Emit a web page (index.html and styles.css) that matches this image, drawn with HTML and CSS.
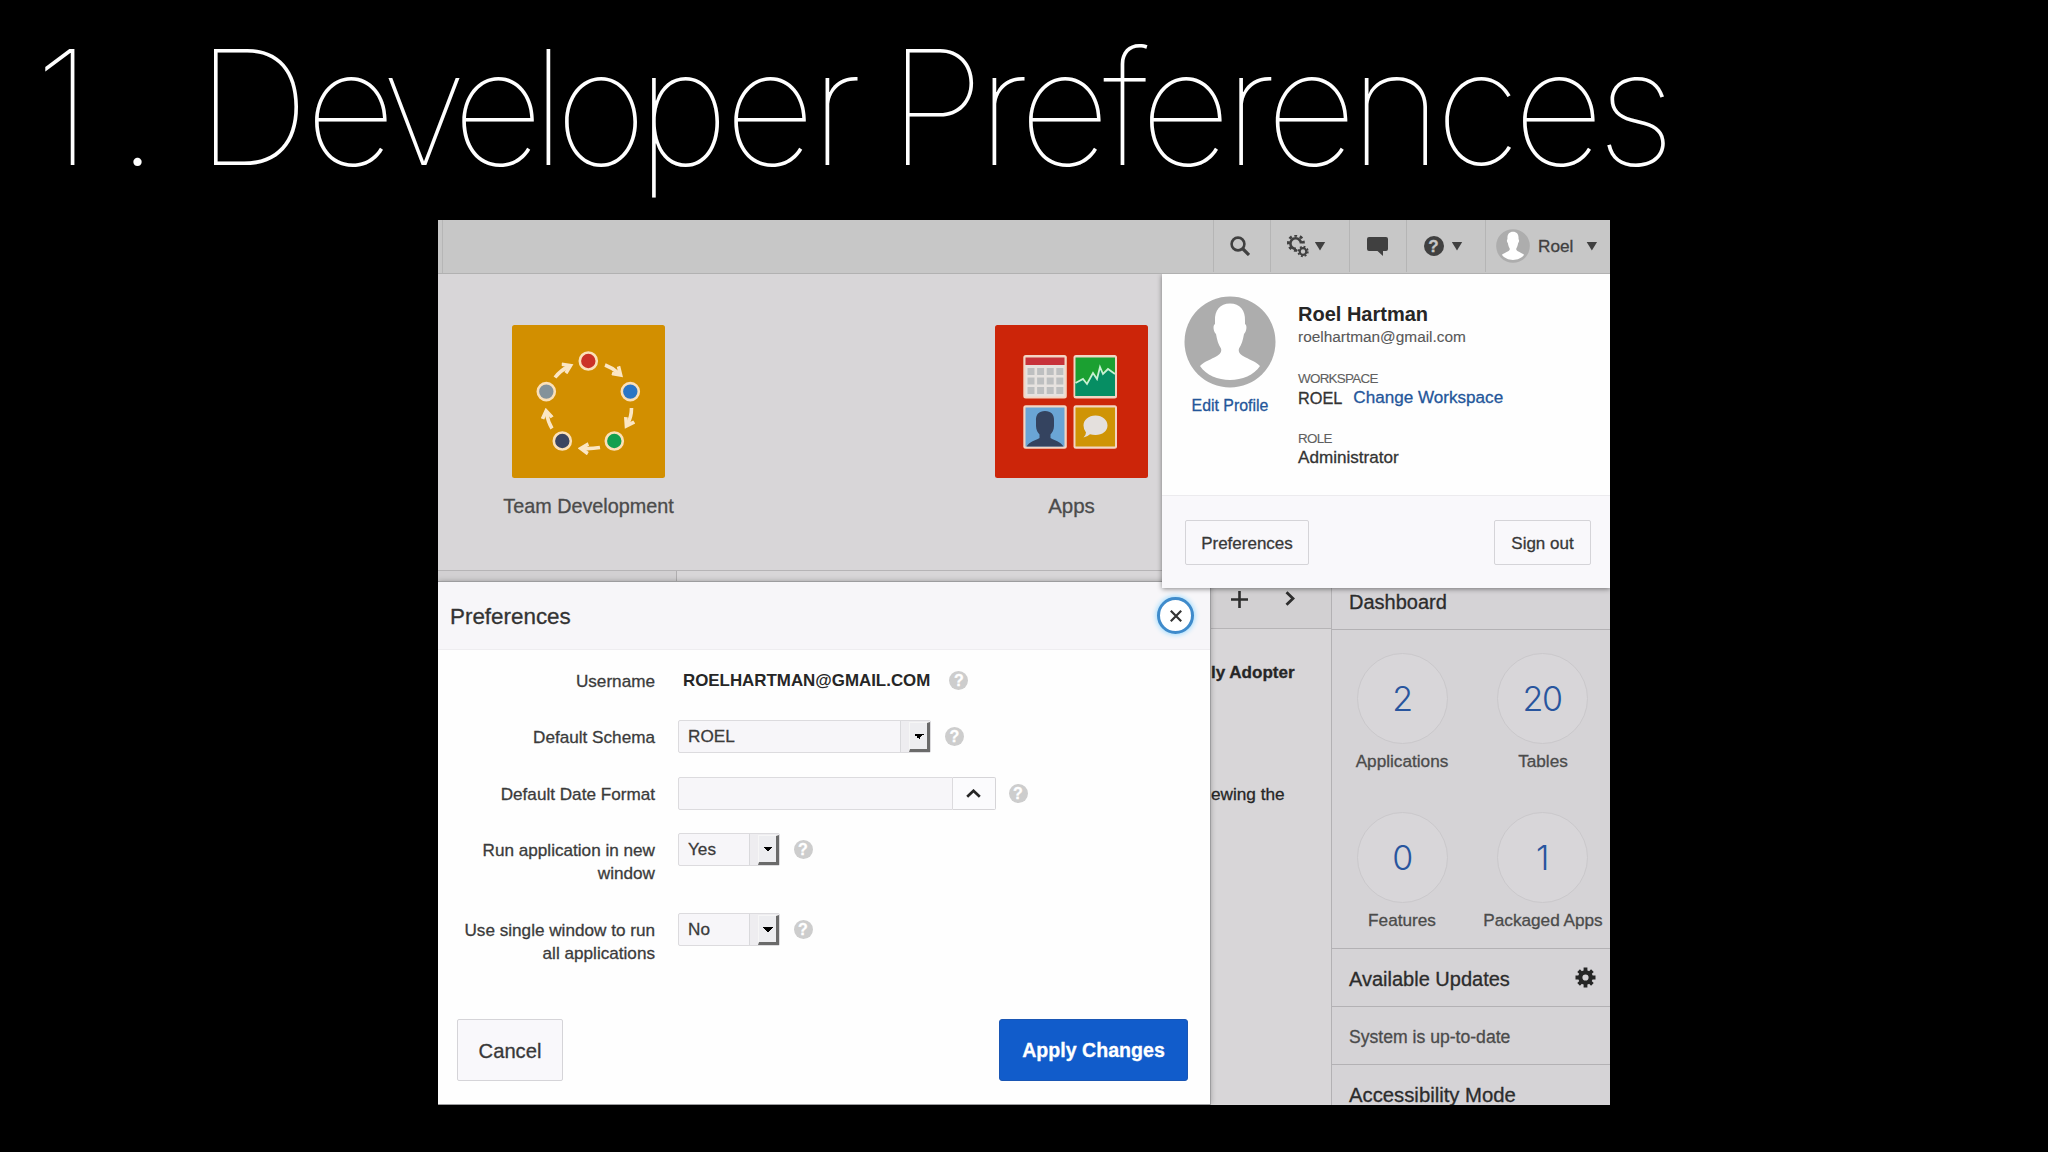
FILE: index.html
```html
<!DOCTYPE html>
<html lang="en">
<head>
<meta charset="utf-8">
<title>1. Developer Preferences</title>
<link rel="stylesheet" href="styles.css">
</head>
<body>
<svg class="defs" width="0" height="0">
  <defs>
    <symbol id="person" viewBox="0 0 92 92">
      <circle cx="46" cy="46" r="45.5" fill="#adadad"/>
      <path fill="#fff" d="M46 7.500C56 7.500 61.500 14 61 25L61 28C63.500 29 62.500 36 60 38C59 44 57.500 49 55 52.500C54 56 56 58 59 60C65 63.500 71 65 76 70C70 79 58 84 46 84C34 84 22 79 16 70C21 65 27 63.500 33 60C36 58 38 56 37 52.500C34.500 49 33 44 32 38C29.500 36 28.500 29 31 28L31 25C30.500 14 36 7.500 46 7.500Z"/>
    </symbol>
    <marker id="head" viewBox="0 0 12 12" refX="7" refY="6" markerWidth="13" markerHeight="13" markerUnits="userSpaceOnUse" orient="auto">
      <path d="M3 0L12 6L3 12L1.500 9L6 6L1.500 3Z" fill="#fbe6c4"/>
    </marker>
  </defs>
</svg>
<main class="slide">
  <h1 class="title"><span class="t-num">1</span><span class="t-dot">.</span><span class="t-dev"><span class="k1">D</span><span class="k2">eve</span><span class="k3">lo</span><span class="k4">pe</span>r</span><span class="t-pref">Preferences</span></h1>

  <section class="app">
    <header class="bar">
      <div class="bar-edge"></div>
      <div class="bar-item b-search"><svg width="20" height="20" viewBox="0 0 20 20" fill="none" stroke="#404040"><circle cx="8" cy="8" r="6.400" stroke-width="2.600"/><path d="M12.500 12.500L19 19" stroke-width="3.200"/></svg></div>
      <div class="bar-item b-gears">
        <svg width="22" height="23" viewBox="0 0 22 23" fill="none" stroke="#404040"><path d="M9 13.800A5.300 5.300 0 1 1 14 8.500" stroke-width="2.600"/><path d="M10 15.300A7.500 7.500 0 1 1 16.400 8.500" stroke-width="2.800" stroke-dasharray="3 2.700"/><circle cx="16" cy="16.500" r="3.300" stroke-width="2.200"/><circle cx="16" cy="16.500" r="4.800" stroke-width="1.800" stroke-dasharray="1.900 1.870"/></svg>
        <i class="caret"></i>
      </div>
      <div class="bar-item b-chat"><svg width="21" height="19" viewBox="0 0 21 19"><path d="M2 0H19Q21 0 21 2V12Q21 14 19 14H16V19L10.500 14H2Q0 14 0 12V2Q0 0 2 0Z" fill="#404040"/></svg></div>
      <div class="bar-item b-help"><span class="q q-dark">?</span><i class="caret"></i></div>
      <div class="bar-item b-user"><svg class="mini" width="34" height="34"><use href="#person"/></svg><span>Roel</span><i class="caret"></i></div>
    </header>

    <div class="home">
      <div class="tile tile-team">
        <svg width="153" height="153" viewBox="0 0 153 153">
          <rect width="153" height="153" rx="2.500" fill="#d28f00"/>
          <g fill="none" stroke="#fbe6c4" stroke-width="3.600">
            <path d="M93 40Q101 43 107 48.500" marker-end="url(#head)"/>
            <path d="M119.500 83Q119.500 92 115.500 99" marker-end="url(#head)"/>
            <path d="M88 122.500Q79 124 71 123.500" marker-end="url(#head)"/>
            <path d="M40 103.500Q36 97 34.500 88" marker-end="url(#head)"/>
            <path d="M43 52.500Q49 45 56.500 41.500" marker-end="url(#head)"/>
          </g>
          <g stroke="#fbe0b8" stroke-width="2.600">
            <circle cx="76.300" cy="36" r="8.500" fill="#cb3127"/>
            <circle cx="118.300" cy="66.600" r="8.500" fill="#2a75c4"/>
            <circle cx="102.300" cy="116" r="8.500" fill="#139f4f"/>
            <circle cx="50.300" cy="116" r="8.500" fill="#3b4561"/>
            <circle cx="34.300" cy="66.600" r="8.500" fill="#84929a"/>
          </g>
        </svg>
        <span>Team Development</span>
      </div>
      <div class="tile tile-apps">
        <svg width="153" height="153" viewBox="0 0 153 153">
          <rect width="153" height="153" rx="2.500" fill="#cc2509"/>
          <g fill="#f3d5c3"><rect x="28.300" y="30" width="43.500" height="43.500" rx="2.500"/><rect x="78.500" y="30" width="43.500" height="43.500" rx="2.500"/><rect x="28.300" y="80.300" width="43.500" height="43.500" rx="2.500"/><rect x="78.500" y="80.300" width="43.500" height="43.500" rx="2.500"/></g>
          <rect x="30.500" y="40" width="39" height="31.500" fill="#e6e2df"/>
          <rect x="30.500" y="32.500" width="39" height="7.500" fill="#c7323a"/>
          <path d="M32.500 46.500H68.500M32.500 56H68.500M32.500 65.500H68.500" stroke="#bdbfc0" stroke-width="7" stroke-dasharray="7 2.600"/>
          <rect x="80.500" y="32.500" width="39.500" height="38.500" fill="#1ba031"/>
          <path d="M80.500 58L88 54L92 59L98 48L102 53L105 42L108 49L113 44L120 49V71H80.500Z" fill="#068e63"/>
          <path d="M80.500 58L88 54L92 59L98 48L102 54L105 42L108 49L113 44L120 49" fill="none" stroke="#c8f0d2" stroke-width="1.800"/>
          <rect x="30.500" y="82.500" width="39" height="39" fill="#6aa5d5"/>
          <path d="M50 86C56 86 59.500 89.500 59 96V101C59 105 57 108 55.500 109.500V113C60 116 65 116 68.500 121.500H31.500C35 116 40 116 44.500 113V109.500C43 108 41 105 41 101V96C40.500 89.500 44 86 50 86Z" fill="#34435f"/>
          <rect x="80.500" y="82.500" width="39.500" height="39" fill="#cf9405"/>
          <path d="M100.500 90.500C107.500 90.500 112.500 95 112.500 100.500S107.500 110 100.500 110Q97.500 110 95 109.300Q92.500 111.700 88.500 112.500Q91 110 91 107.500Q88.500 104.500 88.500 100.500C88.500 95 93.500 90.500 100.500 90.500Z" fill="#e4e0dd"/>
        </svg>
        <span>Apps</span>
      </div>
    </div>

    <div class="lower">
      <div class="tabs"></div>
      <div class="news">
        <div class="news-head">
          <svg width="17" height="17" viewBox="0 0 17 17"><path d="M8.500 0V17M0 8.500H17" stroke="#2e2e2e" stroke-width="2.600"/></svg>
          <svg width="10" height="15" viewBox="0 0 10 15"><path d="M1.500 1.200L8 7.500L1.500 13.800" fill="none" stroke="#2e2e2e" stroke-width="2.800"/></svg>
        </div>
        <p class="adopter">ly Adopter</p>
        <p class="viewing">ewing the</p>
      </div>
      <aside class="side">
        <h2 class="h-dash">Dashboard</h2>
        <div class="stats">
          <div class="stat"><b>2</b><span>Applications</span></div>
          <div class="stat"><b>20</b><span>Tables</span></div>
          <div class="stat"><b>0</b><span>Features</span></div>
          <div class="stat"><b>1</b><span>Packaged Apps</span></div>
        </div>
        <h2 class="h-upd"><span>Available Updates</span>
          <svg width="21" height="21" viewBox="0 0 21 21" fill="none" stroke="#262626"><circle cx="10.500" cy="10.500" r="5.200" stroke-width="4.200"/><path d="M10.500 .5V5M10.500 16V20.500M.5 10.500H5M16 10.500H20.500M3.600 3.600L6.500 6.500M14.500 14.500L17.400 17.400M17.400 3.600L14.500 6.500M6.500 14.500L3.600 17.400" stroke-width="3.800"/></svg>
        </h2>
        <p class="status">System is up-to-date</p>
        <h2 class="h-acc">Accessibility Mode</h2>
      </aside>
    </div>

    <div class="modal">
      <div class="modal-head">
        <h3>Preferences</h3>
        <span class="close"><svg width="12" height="12" viewBox="0 0 12 12"><path d="M.8 .8L11.200 11.200M11.200 .8L.8 11.200" stroke="#333" stroke-width="2.200"/></svg></span>
      </div>
      <div class="form">
        <div class="row"><label>Username</label><div class="ctl user"><strong>ROELHARTMAN@GMAIL.COM</strong><span class="q">?</span></div></div>
        <div class="row"><label>Default Schema</label><div class="ctl"><div class="select wide">ROEL<i class="arrow"></i></div><span class="q">?</span></div></div>
        <div class="row"><label>Default Date Format</label><div class="ctl"><div class="date"></div><div class="pick"><svg width="15" height="9" viewBox="0 0 15 9"><path d="M1.200 7.800L7.500 1.800L13.800 7.800" fill="none" stroke="#262626" stroke-width="2.700"/></svg></div><span class="q">?</span></div></div>
        <div class="row tall"><label>Run application in new<br>window</label><div class="ctl"><div class="select">Yes<i class="arrow"></i></div><span class="q q-near">?</span></div></div>
        <div class="row tall"><label>Use single window to run<br>all applications</label><div class="ctl"><div class="select">No<i class="arrow"></i></div><span class="q q-near">?</span></div></div>
      </div>
      <div class="modal-foot"><span class="btn cancel">Cancel</span><span class="btn apply">Apply Changes</span></div>
    </div>

    <div class="popup">
      <div class="profile">
        <div class="pic"><svg width="92" height="92"><use href="#person"/></svg><a>Edit Profile</a></div>
        <div class="info">
          <strong>Roel Hartman</strong>
          <span class="mail">roelhartman@gmail.com</span>
          <small>WORKSPACE</small>
          <div class="val ws"><span>ROEL</span><a>Change Workspace</a></div>
          <small class="role">ROLE</small>
          <div class="val">Administrator</div>
        </div>
      </div>
      <div class="popup-foot"><span class="btn">Preferences</span><span class="btn out">Sign out</span></div>
    </div>
  </section>
</main>
</body>
</html>
```
FILE: styles.css
```css
*, *::after { box-sizing: border-box; }
body { margin: 0; background: #000; font-family: "Liberation Sans", Arial, sans-serif; }
h1, h2, h3, p { margin: 0; font-weight: normal; }
.defs { display: block; height: 0; }
.slide { width: 2048px; height: 1152px; overflow: hidden; display: flex; flex-direction: column; }

.title { height: 220px; flex: none; display: grid; grid-template-columns: 82px 80px 692px 1fr; padding-left: 34px; font: 100 159px/214px Inter, "Liberation Sans", sans-serif; color: #fff; white-space: nowrap; }
.k1 { letter-spacing: -4.600px; }
.k2 { letter-spacing: -12px; }
.k3 { letter-spacing: -10.400px; }
.k4 { letter-spacing: -5px; }
.t-pref { letter-spacing: -7.200px; }

.app { position: relative; flex: none; width: 1172px; height: 885px; margin-left: 438px; overflow: hidden; background: #d8d6d8; -webkit-text-stroke: .3px; }

.bar { display: flex; height: 54px; background: #c7c7c7; border-bottom: 1px solid #b1b1b1; color: #404040; font-size: 17.200px; }
.bar-edge { width: 5px; border-right: 1px solid #b6b6b6; margin-right: auto; }
.bar-item { display: flex; align-items: center; border-left: 1px solid #b5b5b5; padding-left: 15.500px; height: 52px; }
.b-search { width: 57px; }
.b-gears { width: 79px; gap: 6px; }
.b-chat { width: 57px; padding-left: 16.500px; }
.b-help { width: 79px; gap: 8px; padding-left: 16.500px; }
.b-user { width: 125px; padding-left: 10px; }
.mini { margin-right: 8px; }
.b-user .caret { margin-left: 13px; }
.caret { width: 11px; height: 9px; background: #404040; clip-path: polygon(0 0, 100% 0, 50% 100%); }

.q { display: block; flex: none; width: 19px; height: 19px; border-radius: 50%; background: #cdcdcd; color: #fff; font: bold 16px/20px "Liberation Sans", sans-serif; text-align: center; margin-left: 14px; }
.q-dark { width: 20px; height: 20px; background: #404040; color: #c7c7c7; margin: 0; font-size: 17px; line-height: 21px; }
.q-near { margin-left: 13.500px; }

.home { display: flex; height: 297px; padding: 51px 0 0 74px; gap: 330px; border-bottom: 1px solid #b6b4b6; }
.tile { width: 153px; display: flex; flex-direction: column; align-items: center; font-size: 19.800px; line-height: 24px; color: #4b4b4b; white-space: nowrap; }
.tile svg { margin-bottom: 16px; }
.tile-apps { font-size: 20.500px; }

.lower { display: flex; height: 534px; }
.tabs { width: 239px; border-right: 1px solid #b0aeb0; background: #d2d0d2; flex: none; }
.news { flex: 1; padding-left: 534px; color: #262626; white-space: nowrap; }
.news-head { height: 58px; display: flex; gap: 37px; padding: 20px 0 0 20px; border-bottom: 1px solid #b6b4b6; background: #d2d0d2; }
.adopter { font: bold 17.050px/24px "Liberation Sans", sans-serif; margin-top: 32px; }
.viewing { font-size: 17.200px; line-height: 24px; margin-top: 97px; }

.side { width: 279px; flex: none; border-left: 1px solid #b3b1b4; background: #d5d3d6; color: #2c2c2c; white-space: nowrap; }
.side h2 { font-size: 20px; line-height: 24px; padding-left: 17px; border-bottom: 1px solid #b3b1b4; }
.side .h-dash { height: 59px; padding-top: 19px; }
.stats { display: grid; grid-template-columns: 140px 140px; grid-template-rows: 159px 159px; height: 319px; border-bottom: 1px solid #b3b1b4; }
.stat { display: flex; flex-direction: column; align-items: center; padding-top: 23px; font-size: 17.200px; line-height: 22px; color: #4b4b4b; }
.stat b { width: 91px; height: 91px; border: 1px solid #cac8cb; border-radius: 50%; background: #d8d6d9; font: 300 34px/90px Inter, sans-serif; letter-spacing: -1.500px; text-align: center; color: #28559e; margin-bottom: 6px; -webkit-text-stroke: 0; }
.stat:nth-child(even) span { padding-left: 2px; }
.side .h-upd { height: 58px; display: flex; justify-content: space-between; align-items: center; padding-right: 14px; }
.h-upd span { padding-top: 2px; }
.h-upd svg { margin-top: -1px; }
.status { height: 58px; font-size: 17.600px; line-height: 60px; padding-left: 17px; border-bottom: 1px solid #b3b1b4; color: #4b4b4b; }
.side .h-acc { font-size: 20.300px; padding-top: 18px; border: 0; }

.modal { position: absolute; left: 0; top: 362px; width: 772px; height: 522px; background: #fefefe; display: flex; flex-direction: column; box-shadow: 0 0 0 1px #9d9d9f, 0 0 6px rgba(0,0,0,.35); color: #3b3b3b; }
.modal-head { height: 68px; display: flex; justify-content: space-between; align-items: center; background: #f7f6f9; border-bottom: 1px solid #eeedf0; padding: 0 16px 0 12px; }
.modal-head h3 { font-size: 22.400px; color: #333; padding-top: 2px; }
.close { width: 37px; height: 37px; border-radius: 50%; border: 3px solid #3f8bcb; background: #fff; display: flex; align-items: center; justify-content: center; box-shadow: 0 0 5px 1px #9fdcff; }
.form { padding-top: 13.500px; font-size: 17.150px; line-height: 23px; }
.row { display: flex; gap: 23px; height: 56.600px; }
.row.tall { height: 79.600px; }
.row label { width: 217px; text-align: right; padding-top: 6px; white-space: nowrap; }
.ctl { display: flex; align-items: center; height: 33px; }
.user { padding-left: 5px; }
.user strong { font-size: 16.900px; color: #262626; -webkit-text-stroke: 0; padding-top: 1px; }
.user .q { margin-left: 19px; }
.select { width: 102px; height: 33px; border: 1px solid #dcdbde; background: #f7f6f9; border-radius: 2px; display: flex; align-items: center; justify-content: space-between; padding-left: 9px; }
.wide { width: 253px; }
.arrow { height: 31px; width: 30px; flex: none; border-left: 1px solid #d9d9dc; background: #eeedf0; padding: 1px 0 0 8px; }
.arrow::after { content: ""; display: block; width: 21px; height: 30px; border: solid; border-width: 1px 3px 3px 1px; border-color: #f6f6f6 #6a6a6a #6a6a6a #f6f6f6; background: linear-gradient(45deg, transparent 50%, #000 50%) no-repeat 4px 11px / 5px 5px, linear-gradient(-45deg, transparent 50%, #000 50%) no-repeat 9px 11px / 5px 5px, #ededf0; }
.date { width: 275px; height: 33px; border: 1px solid #dcdbde; background: #f7f6f9; border-radius: 2px 0 0 2px; }
.pick { width: 43px; height: 33px; border: 1px solid #d6d5d8; border-left: 0; background: #fbfbfd; border-radius: 0 2px 2px 0; display: flex; align-items: center; justify-content: center; padding-right: 2px; }
.pick + .q { margin-left: 12.500px; }
.modal-foot { margin-top: auto; display: flex; justify-content: space-between; padding: 0 22px 23px 19px; }
.btn { display: flex; align-items: center; justify-content: center; border: 1px solid #d5d4d8; border-radius: 2px; background: #f9f8fb; color: #383838; white-space: nowrap; }
.cancel { width: 106px; height: 62px; font-size: 20.200px; padding-top: 3px; }
.apply { width: 189px; height: 62px; font-size: 19.600px; font-weight: bold; color: #fff; background: #115ccb; border-color: #1a56b4; border-radius: 3px; }

.popup { position: absolute; left: 724px; top: 54px; width: 448px; height: 314px; background: #fefefe; box-shadow: 0 1px 5px rgba(0,0,0,.45); color: #333; display: flex; flex-direction: column; clip-path: inset(0 0 -10px -10px); }
.profile { display: flex; height: 222px; border-bottom: 1px solid #ecebee; padding: 23px 0 0 22px; }
.pic { width: 92px; display: flex; flex-direction: column; align-items: center; font-size: 15.900px; line-height: 20px; white-space: nowrap; gap: 8px; margin-top: -1px; }
.popup a { color: #24569a; }
.info { display: flex; flex-direction: column; margin-left: 22px; white-space: nowrap; }
.info strong { font-size: 20px; line-height: 24px; padding-top: 5px; color: #262626; -webkit-text-stroke: 0; }
.mail { font-size: 15.400px; line-height: 20px; color: #585858; padding-top: 1px; -webkit-text-stroke: .1px; }
.info small { font-size: 13.400px; line-height: 16px; letter-spacing: -.700px; color: #606060; margin-top: 24px; -webkit-text-stroke: .1px; }
.info .role { margin-top: 23px; }
.val { font-size: 17.100px; line-height: 20px; padding-top: 1px; }
.ws { display: flex; gap: 11px; }
.ws span { font-size: 16.300px; }
.popup-foot { flex: 1; background: #f9f8fb; display: flex; justify-content: space-between; padding: 24px 19px 0 23px; }
.popup-foot .btn { width: 124px; height: 45px; font-size: 17px; padding-top: 2px; }
.popup-foot .out { width: 97px; }
```
